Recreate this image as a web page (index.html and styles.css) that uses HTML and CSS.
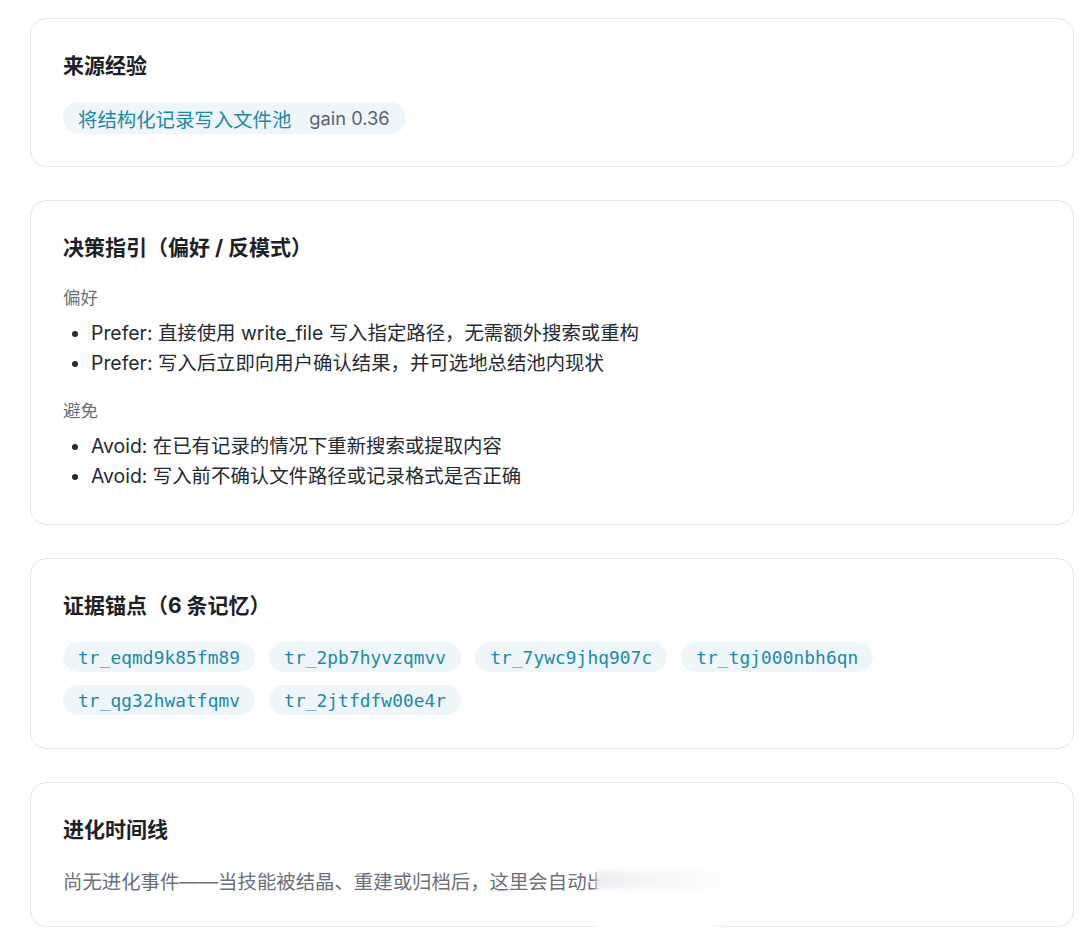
FILE: index.html
```html
<!DOCTYPE html>
<html lang="zh-CN">
<head>
<meta charset="utf-8">
<title>技能详情</title>
<link rel="stylesheet" href="styles.css">
</head>
<body>
<main class="stack">
  <section class="card">
    <h2 class="card-title">来源经验</h2>
    <div class="chips">
      <span class="chip source"><span class="source-name">将结构化记录写入文件池</span><span class="gain">gain 0.36</span></span>
    </div>
  </section>

  <section class="card roomy">
    <h2 class="card-title">决策指引（偏好 / 反模式）</h2>
    <div class="group">
      <div class="group-label">偏好</div>
      <ul class="rules">
        <li>Prefer: 直接使用 write_file 写入指定路径，无需额外搜索或重构</li>
        <li>Prefer: 写入后立即向用户确认结果，并可选地总结池内现状</li>
      </ul>
    </div>
    <div class="group">
      <div class="group-label">避免</div>
      <ul class="rules">
        <li>Avoid: 在已有记录的情况下重新搜索或提取内容</li>
        <li>Avoid: 写入前不确认文件路径或记录格式是否正确</li>
      </ul>
    </div>
  </section>

  <section class="card roomy">
    <h2 class="card-title">证据锚点（6 条记忆）</h2>
    <div class="chips">
      <span class="chip mono">tr_eqmd9k85fm89</span>
      <span class="chip mono">tr_2pb7hyvzqmvv</span>
      <span class="chip mono">tr_7ywc9jhq907c</span>
      <span class="chip mono">tr_tgj000nbh6qn</span>
      <span class="chip mono">tr_qg32hwatfqmv</span>
      <span class="chip mono">tr_2jtfdfw00e4r</span>
    </div>
  </section>

  <section class="card timeline">
    <h2 class="card-title">进化时间线</h2>
    <p class="empty">尚无进化事件——当技能被结晶、重建或归档后，这里会自动出现。</p>
    <span class="smudge" aria-hidden="true"></span>
  </section>
</main>
</body>
</html>
```

FILE: styles.css
```css
* { box-sizing: border-box; }

html, body {
  margin: 0;
  background: #ffffff;
}

body {
  padding: 18px 6px 0 30px;
  font-family: Inter, "Noto Sans CJK SC", "Noto Sans", sans-serif;
  color: #24292f;
}

.stack {
  display: flex;
  flex-direction: column;
  gap: 33px;
}

.card {
  position: relative;
  border: 1px solid #e6e7e9;
  border-radius: 16px;
  padding: 31px 32px 32px;
  background: #fff;
}

.card.roomy {
  padding-bottom: 33px;
}

.card-title {
  margin: 0 0 20px;
  font-size: 21px;
  line-height: 32px;
  font-weight: 700;
  color: #1d2127;
}

.chips {
  display: flex;
  flex-wrap: wrap;
  gap: 13px 14px;
}

.chip {
  display: inline-flex;
  align-items: center;
  background: #eef6f9;
  border-radius: 16px;
  color: #2089a8;
  white-space: nowrap;
}

.chip.source {
  height: 32px;
  padding: 0 16px 0 15px;
  font-size: 19.4px;
  gap: 18px;
}

.chip.source .gain {
  color: #5b636d;
  font-size: 18.3px;
}

.chip.mono {
  height: 30px;
  padding: 0 15px;
  font-family: "DejaVu Sans Mono", "Liberation Mono", monospace;
  font-size: 17.8px;
  letter-spacing: 0.1px;
}

.group-label {
  margin-top: 21px;
  font-size: 17.5px;
  line-height: 26px;
  color: #6b7079;
}

.group + .group .group-label {
  margin-top: 20px;
}

.rules {
  margin: 7px 0 0;
  padding-left: 28px;
  font-size: 19.4px;
  line-height: 30px;
  color: #262b31;
}

.empty {
  margin: 22px 0 0;
  font-size: 19.4px;
  line-height: 28px;
  color: #6b7079;
}

.timeline .card-title {
  margin-bottom: 0;
}

.timeline {
  padding-bottom: 30px;
}

/* soft white patch fading the tail of the empty-state line */
.smudge {
  position: absolute;
  left: 565px;
  top: 80px;
  width: 140px;
  height: 90px;
  background:
    linear-gradient(90deg, rgba(236,237,241,0.9) 0%, rgba(240,241,244,0.6) 45%, rgba(255,255,255,0) 100%) 0 8px / 100% 18px no-repeat,
    linear-gradient(90deg, #ffffff 0%, #ffffff 75%, rgba(255,255,255,0) 100%);
  filter: blur(2.5px);
}
```
